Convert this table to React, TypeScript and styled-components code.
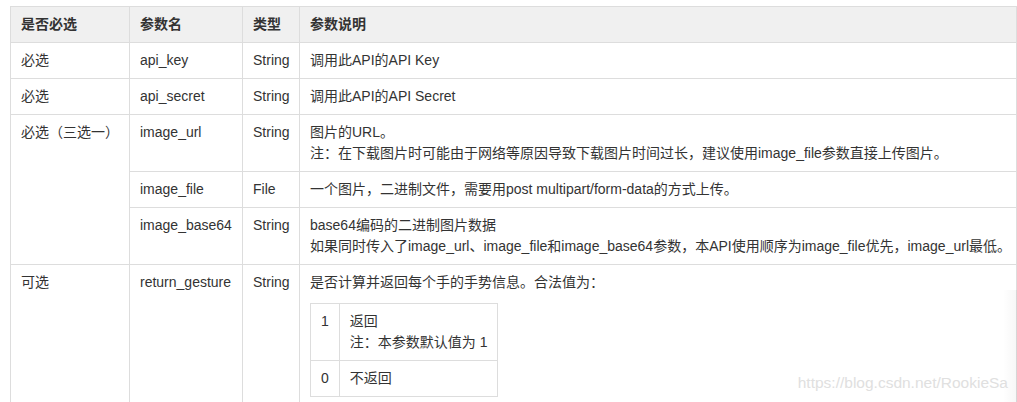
import React from "react";
import styled, { createGlobalStyle } from "styled-components";

const GlobalStyle = createGlobalStyle`
  html, body {
    margin: 0;
    padding: 0;
    background: #ffffff;
  }
  body {
    font-family: "Liberation Sans", "Noto Sans CJK SC", Arial, sans-serif;
    color: #333333;
  }
`;

const Page = styled.div`
  position: relative;
  width: 1017px;
  height: 402px;
  overflow: hidden;
  padding: 6px 0 0 10px;
  box-sizing: border-box;
  background: #ffffff;
`;

const ParamTable = styled.table`
  border-collapse: collapse;
  table-layout: fixed;
  width: 1007px;
  font-size: 14px;
  line-height: 21px;
  color: #333333;
`;

const HeadCell = styled.th`
  background: #f0f0f0;
  border: 1px solid #dddddd;
  padding: 7px 10px;
  text-align: left;
  vertical-align: top;
  font-weight: bold;
  white-space: nowrap;
`;

const Cell = styled.td`
  border: 1px solid #dddddd;
  padding: 7px 10px;
  text-align: left;
  vertical-align: top;
  white-space: nowrap;
`;

const Para = styled.p`
  margin: 0 0 10px 0;
`;

const ValueTable = styled.table`
  border-collapse: collapse;
  font-size: 14px;
  line-height: 21px;
`;

const ValueCell = styled.td<{ $center?: boolean }>`
  border: 1px solid #dddddd;
  padding: 7px 10px;
  vertical-align: top;
  text-align: ${(p) => (p.$center ? "center" : "left")};
  white-space: nowrap;
`;

const Watermark = styled.div`
  position: absolute;
  right: 9px;
  bottom: 9px;
  font-family: "Liberation Sans", Arial, sans-serif;
  font-size: 15.5px;
  line-height: 20px;
  color: #e0e0e0;
  pointer-events: none;
`;

const EdgeShade = styled.div`
  position: absolute;
  right: 0;
  top: 290px;
  bottom: 0;
  width: 14px;
  background: linear-gradient(to right, rgba(0, 0, 0, 0), rgba(0, 0, 0, 0.035));
  pointer-events: none;
`;

type Row = {
  req?: string;
  reqSpan?: number;
  name: string;
  type: string;
  desc: React.ReactNode;
};

const rows: Row[] = [
  { req: "必选", name: "api_key", type: "String", desc: "调用此API的API Key" },
  { req: "必选", name: "api_secret", type: "String", desc: "调用此API的API Secret" },
  {
    req: "必选（三选一）",
    reqSpan: 3,
    name: "image_url",
    type: "String",
    desc: (
      <>
        图片的URL。
        <br />
        注：在下载图片时可能由于网络等原因导致下载图片时间过长，建议使用image_file参数直接上传图片。
      </>
    ),
  },
  {
    name: "image_file",
    type: "File",
    desc: "一个图片，二进制文件，需要用post multipart/form-data的方式上传。",
  },
  {
    name: "image_base64",
    type: "String",
    desc: (
      <>
        base64编码的二进制图片数据
        <br />
        如果同时传入了image_url、image_file和image_base64参数，本API使用顺序为image_file优先，image_url最低。
      </>
    ),
  },
  {
    req: "可选",
    name: "return_gesture",
    type: "String",
    desc: (
      <>
        <Para>是否计算并返回每个手的手势信息。合法值为：</Para>
        <ValueTable>
          <tbody>
            <tr>
              <ValueCell $center>1</ValueCell>
              <ValueCell>
                返回
                <br />
                注：本参数默认值为 1
              </ValueCell>
            </tr>
            <tr>
              <ValueCell $center>0</ValueCell>
              <ValueCell>不返回</ValueCell>
            </tr>
          </tbody>
        </ValueTable>
      </>
    ),
  },
];

export default function App() {
  return (
    <Page>
      <GlobalStyle />
      <ParamTable>
        <colgroup>
          <col style={{ width: 119 }} />
          <col style={{ width: 113 }} />
          <col style={{ width: 57 }} />
          <col />
        </colgroup>
        <thead>
          <tr>
            <HeadCell>是否必选</HeadCell>
            <HeadCell>参数名</HeadCell>
            <HeadCell>类型</HeadCell>
            <HeadCell>参数说明</HeadCell>
          </tr>
        </thead>
        <tbody>
          {rows.map((r) => (
            <tr key={r.name}>
              {r.req !== undefined && <Cell rowSpan={r.reqSpan}>{r.req}</Cell>}
              <Cell>{r.name}</Cell>
              <Cell>{r.type}</Cell>
              <Cell>{r.desc}</Cell>
            </tr>
          ))}
        </tbody>
      </ParamTable>
      <EdgeShade />
      <Watermark>https://blog.csdn.net/RookieSa</Watermark>
    </Page>
  );
}
